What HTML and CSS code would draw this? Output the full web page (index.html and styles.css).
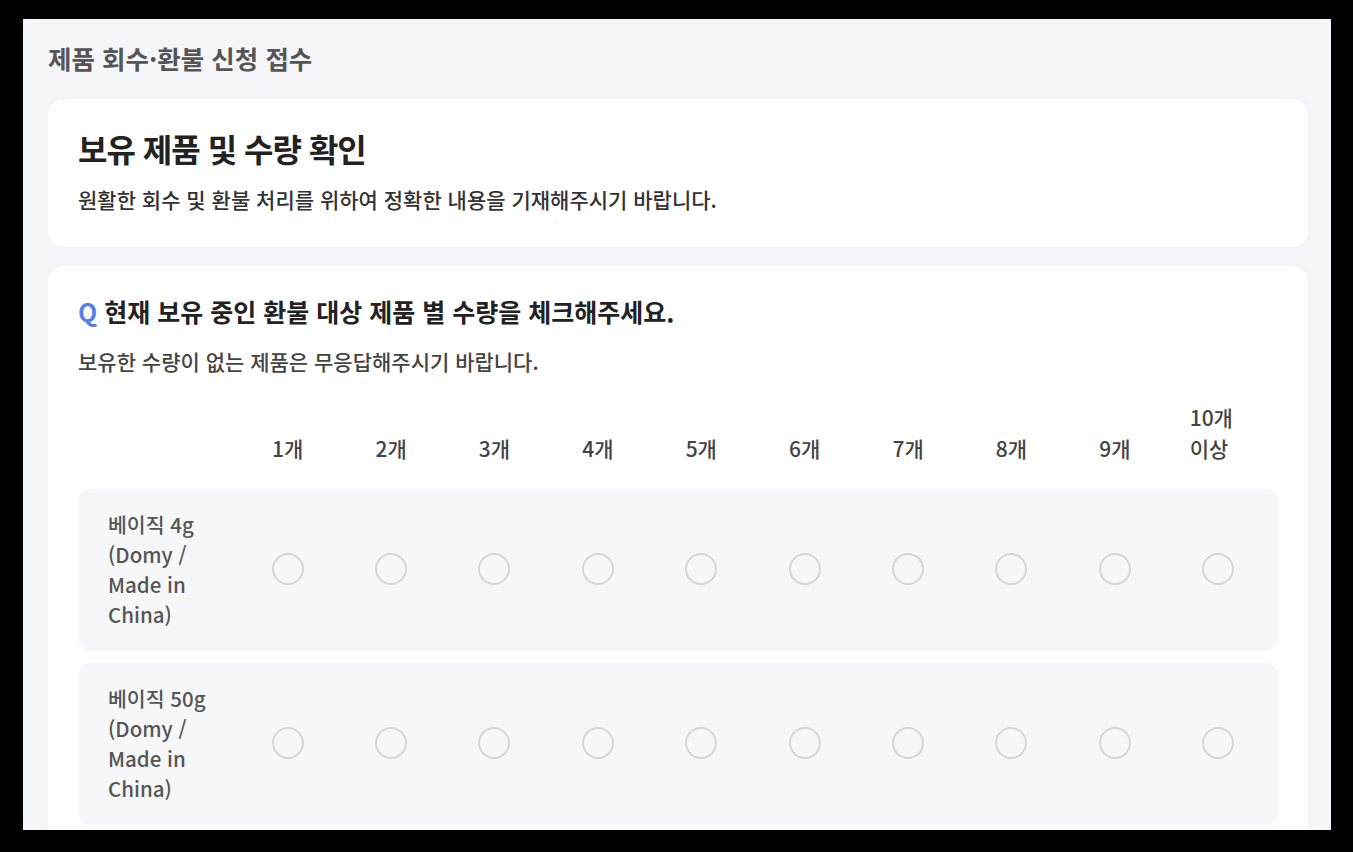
FILE: index.html
```html
<!DOCTYPE html>
<html lang="ko">
<head>
<meta charset="utf-8">
<title>제품 회수·환불 신청 접수</title>
<link rel="stylesheet" href="styles.css">
</head>
<body>
<div class="screen">
  <h1 class="page-title">제품 회수·환불 신청 접수</h1>

  <section class="card intro">
    <h2 class="card-title">보유 제품 및 수량 확인</h2>
    <p class="card-desc">원활한 회수 및 환불 처리를 위하여 정확한 내용을 기재해주시기 바랍니다.</p>
  </section>

  <section class="card question">
    <h3 class="q-title"><span class="q-mark">Q</span> 현재 보유 중인 환불 대상 제품 별 수량을 체크해주세요.</h3>
    <p class="q-desc">보유한 수량이 없는 제품은 무응답해주시기 바랍니다.</p>

    <div class="matrix">
      <div class="matrix-head">
        <div class="head-label"></div>
        <div class="head-cell">1개</div>
        <div class="head-cell">2개</div>
        <div class="head-cell">3개</div>
        <div class="head-cell">4개</div>
        <div class="head-cell">5개</div>
        <div class="head-cell">6개</div>
        <div class="head-cell">7개</div>
        <div class="head-cell">8개</div>
        <div class="head-cell">9개</div>
        <div class="head-cell last"><span class="wrap">10개 이상</span></div>
      </div>

      <div class="matrix-row">
        <div class="row-label">베이직 4g (Domy / Made in China)</div>
        <div class="cell"><span class="radio"></span></div>
        <div class="cell"><span class="radio"></span></div>
        <div class="cell"><span class="radio"></span></div>
        <div class="cell"><span class="radio"></span></div>
        <div class="cell"><span class="radio"></span></div>
        <div class="cell"><span class="radio"></span></div>
        <div class="cell"><span class="radio"></span></div>
        <div class="cell"><span class="radio"></span></div>
        <div class="cell"><span class="radio"></span></div>
        <div class="cell"><span class="radio"></span></div>
      </div>

      <div class="matrix-row">
        <div class="row-label">베이직 50g (Domy / Made in China)</div>
        <div class="cell"><span class="radio"></span></div>
        <div class="cell"><span class="radio"></span></div>
        <div class="cell"><span class="radio"></span></div>
        <div class="cell"><span class="radio"></span></div>
        <div class="cell"><span class="radio"></span></div>
        <div class="cell"><span class="radio"></span></div>
        <div class="cell"><span class="radio"></span></div>
        <div class="cell"><span class="radio"></span></div>
        <div class="cell"><span class="radio"></span></div>
        <div class="cell"><span class="radio"></span></div>
      </div>
    </div>
  </section>
</div>
</body>
</html>
```

FILE: styles.css
```css
* {
  box-sizing: border-box;
}

html, body {
  margin: 0;
  background: #000;
}

body {
  padding: 19px 22px 22px 23px;
  font-family: "Noto Sans CJK KR", "Noto Sans", sans-serif;
}

.screen {
  height: 811px;
  overflow: hidden;
  background: #f5f6f9;
  padding: 22px 23px 0 25px;
}

.page-title {
  margin: 0 0 24px;
  font-size: 25.5px;
  line-height: 34px;
  font-weight: 700;
  color: #555;
}

.card {
  background: #fff;
  border-radius: 16px;
  box-shadow: 0 0 12px rgba(0, 0, 0, 0.025);
}

.intro {
  padding: 29px 30px 33px;
  margin-bottom: 19px;
}

.card-title {
  margin: 0;
  font-size: 32px;
  line-height: 40px;
  font-weight: 700;
  color: #222;
  letter-spacing: -1px;
}

.card-desc {
  margin: 16px 0 0;
  font-size: 21px;
  line-height: 30px;
  font-weight: 500;
  color: #333;
}

.question {
  padding: 28px 30px 30px;
}

.q-title {
  margin: 0;
  font-size: 25px;
  line-height: 34px;
  font-weight: 700;
  color: #222;
}

.q-mark {
  color: #5b7ee5;
}

.q-desc {
  margin: 18px 0 0;
  font-size: 21px;
  line-height: 30px;
  font-weight: 500;
  color: #444;
}

.matrix {
  margin-top: 26px;
}

.matrix-head,
.matrix-row {
  display: grid;
  grid-template-columns: 158px repeat(10, 1fr);
  padding-right: 8px;
}

.matrix-head {
  align-items: end;
  margin-bottom: 25px;
}

.head-cell {
  text-align: center;
  font-size: 21px;
  line-height: 31px;
  font-weight: 500;
  color: #444;
}

.head-cell.last {
  padding-right: 14px;
}

.wrap {
  display: inline-block;
  width: min-content;
  word-break: keep-all;
  text-align: left;
}

.matrix-row {
  background: #f6f7f9;
  border-radius: 12px;
  padding-top: 20px;
  padding-bottom: 22px;
  margin-bottom: 12px;
  align-items: center;
}

.row-label {
  padding-left: 30px;
  padding-right: 12px;
  font-size: 20.5px;
  line-height: 30px;
  font-weight: 500;
  color: #555;
}

.cell {
  display: flex;
  justify-content: center;
  align-items: center;
}

.radio {
  width: 32px;
  height: 32px;
  border: 2px solid #d6d6d6;
  border-radius: 50%;
}
```
